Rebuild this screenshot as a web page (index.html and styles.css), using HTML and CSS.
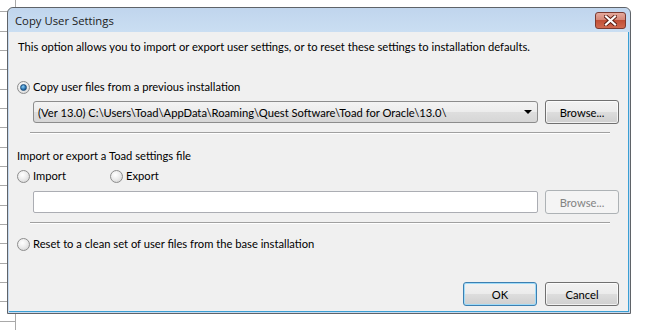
FILE: index.html
```html
<!DOCTYPE html>
<html lang="en">
<head>
    <meta charset="UTF-8">
    <meta name="viewport" content="width=device-width, initial-scale=1.0">
    <title>Copy User Settings</title>
    <link rel="stylesheet" href="styles.css">
</head>
<body>
    <div class="window">
        <div class="titlebar">
            <span class="title">Copy User Settings</span>
            <span class="close-btn">
                <svg width="13" height="11" viewBox="0 0 13 11">
                    <path d="M2 1.5 L11 9.5 M11 1.5 L2 9.5" stroke="#5a1d12" stroke-width="4" stroke-linecap="square"/>
                    <path d="M2 1.5 L11 9.5 M11 1.5 L2 9.5" stroke="#ffffff" stroke-width="2.2" stroke-linecap="square"/>
                </svg>
            </span>
        </div>

        <div class="client">
            <p class="intro">This option allows you to import or export user settings, or to reset these settings to installation defaults.</p>

            <label class="option option-copy"><span class="radio checked"></span>Copy user files from a previous installation</label>

            <div class="field-row">
                <div class="combo">
                    <span class="combo-text">(Ver 13.0) C:\Users\Toad\AppData\Roaming\Quest Software\Toad for Oracle\13.0\</span>
                    <span class="combo-arrow"></span>
                </div>
                <button class="btn">Browse...</button>
            </div>

            <div class="separator"></div>

            <div class="group-label">Import or export a Toad settings file</div>
            <div class="radio-row">
                <label class="option option-import"><span class="radio"></span>Import</label>
                <label class="option"><span class="radio"></span>Export</label>
            </div>

            <div class="field-row field-row-file">
                <div class="textbox"></div>
                <button class="btn" disabled>Browse...</button>
            </div>

            <div class="separator"></div>

            <label class="option option-reset"><span class="radio"></span>Reset to a clean set of user files from the base installation</label>

            <div class="footer">
                <button class="btn btn-default">OK</button>
                <button class="btn">Cancel</button>
            </div>
        </div>
    </div>
</body>
</html>
```

FILE: styles.css
```css
body {
    margin: 0;
    width: 650px;
    height: 330px;
    overflow: hidden;
    font-family: Lato, "Liberation Sans", sans-serif;
    font-size: 11.2px;
    color: #000;
    background-color: #fff;
    /* spreadsheet grid peeking out behind the dialog */
    background-image:
        linear-gradient(#a9a9a9, #a9a9a9),
        repeating-linear-gradient(to bottom, transparent 0, transparent 11.5px, #a9a9a9 11.5px, #a9a9a9 12.5px, transparent 12.5px, transparent 19.33px);
    background-size: 1px 100%, 16px 100%;
    background-position: 15px 0, 0 0;
    background-repeat: no-repeat;
}

.window {
    margin: 7px 0 0 7px;
    width: 624px;
    height: 307px;
    box-sizing: border-box;
    border: 1px solid #5f6368;
    border-radius: 6px 6px 0 0;
    background: #c6daf0;
    padding: 0 1px 1px 1px;
    display: flex;
    flex-direction: column;
}

.titlebar {
    height: 24px;
    display: flex;
    align-items: center;
    justify-content: space-between;
    padding: 0 3px 0 6px;
    background: linear-gradient(#c0d5ed, #cadef2);
    border-radius: 5px 5px 0 0;
}

.title {
    font-family: "Open Sans", "Noto Sans", sans-serif;
    font-size: 11.3px;
    color: #1b1b1b;
}

.close-btn {
    width: 31px;
    height: 17px;
    box-sizing: border-box;
    align-self: flex-start;
    margin-top: 4px;
    border: 1px solid #7a3a30;
    border-radius: 3px;
    background: linear-gradient(#e4a99c 0%, #d58878 45%, #c14f36 50%, #d06a50 100%);
    display: flex;
    align-items: center;
    justify-content: center;
}

.client {
    flex: 1;
    background: #f0f0f0;
    border-right: 1px solid #3a9fd4;
    border-bottom: 1px solid #3a9fd4;
    padding: 7px 9px 0 8px;
    display: flex;
    flex-direction: column;
}

.intro {
    margin: 0;
    padding-left: 1px;
    line-height: 16px;
}

.option {
    display: flex;
    align-items: center;
    height: 16px;
    line-height: 16px;
}

.option-copy {
    margin-top: 24px;
}

.radio {
    width: 13px;
    height: 13px;
    box-sizing: border-box;
    margin-right: 3px;
    border: 1px solid #8d8d8d;
    border-radius: 50%;
    background: radial-gradient(circle at 40% 35%, #ffffff 0%, #ededed 45%, #cdcdcd 100%);
    display: flex;
    align-items: center;
    justify-content: center;
    flex-shrink: 0;
}

.radio.checked::after {
    content: "";
    width: 5px;
    height: 5px;
    border-radius: 50%;
    background: radial-gradient(circle at 40% 35%, #8fd0f5 0%, #2a76b5 55%, #103d6b 100%);
    border: 1px solid #1b4e7c;
}

.field-row {
    display: flex;
    align-items: center;
    height: 24px;
    margin-top: 5px;
    margin-left: 16px;
}

.field-row-file {
    margin-top: 6px;
}

.combo {
    flex: 1;
    height: 22px;
    box-sizing: border-box;
    border: 1px solid #8c8c8c;
    border-radius: 3px;
    background: linear-gradient(#f3f3f3 0%, #ececec 50%, #dedede 51%, #d6d6d6 100%);
    display: flex;
    align-items: center;
    padding: 0 5px 0 4px;
}

.combo-text {
    flex: 1;
    white-space: nowrap;
    overflow: hidden;
}

.combo-arrow {
    width: 0;
    height: 0;
    border-left: 4px solid transparent;
    border-right: 4px solid transparent;
    border-top: 4px solid #000;
}

.textbox {
    flex: 1;
    height: 22px;
    box-sizing: border-box;
    border: 1px solid #abadb3;
    border-radius: 2px;
    background: #fff;
}

.btn {
    width: 74px;
    height: 24px;
    margin-left: 7px;
    box-sizing: border-box;
    border: 1px solid #707070;
    border-radius: 3px;
    background: linear-gradient(#f2f2f2 0%, #ebebeb 50%, #dddddd 51%, #cfcfcf 100%);
    box-shadow: inset 0 0 0 1px rgba(255, 255, 255, 0.7);
    font-family: inherit;
    font-size: inherit;
    color: #000;
    padding: 0;
}

.btn:disabled {
    border-color: #adb2b5;
    background: #f4f4f4;
    box-shadow: none;
    color: #838383;
}

.btn-default {
    border-color: #3c7fb1;
    box-shadow: inset 0 0 0 1px #9fdbf8;
}

.separator {
    margin: 8px 9px 0 13px;
    border-top: 1px solid #a0a0a0;
    border-bottom: 1px solid #ffffff;
}

.group-label {
    margin-top: 14px;
    line-height: 16px;
}

.radio-row {
    display: flex;
    margin-top: 4px;
}

.option-import {
    width: 93px;
}

.option-reset {
    margin-top: 12px;
}

.footer {
    display: flex;
    justify-content: flex-end;
    gap: 1px;
    margin-top: 30px;
}
```
